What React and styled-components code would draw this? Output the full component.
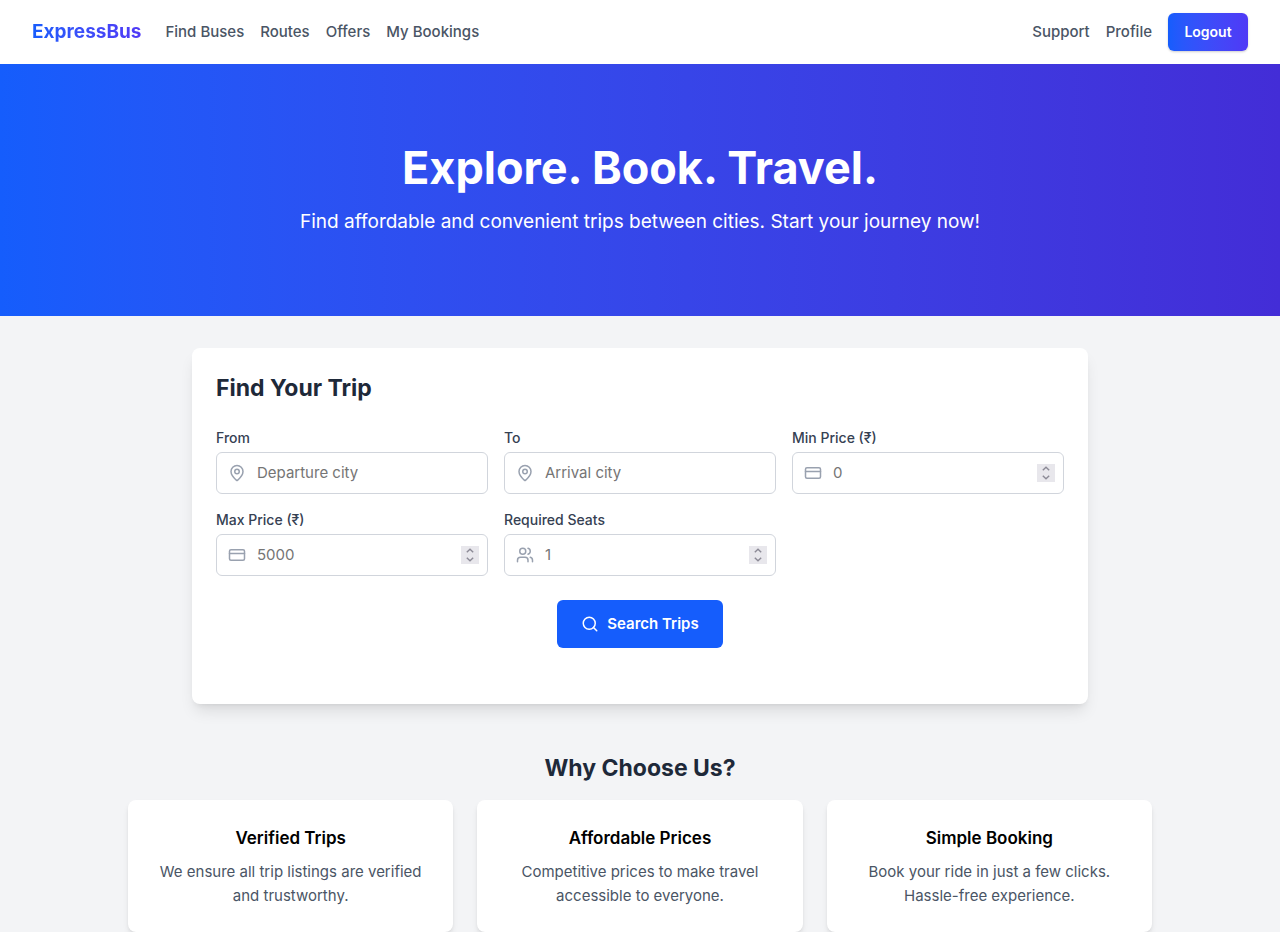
import React, { useRef } from "react";
import styled, { createGlobalStyle } from "styled-components";
import { CreditCard, MapPin, Search, Users } from "lucide-react";

const GlobalStyle = createGlobalStyle`
  *, *::before, *::after { box-sizing: border-box; }
  body {
    margin: 0;
    background: #f3f4f6;
    color: #000;
    font-family: Inter, "Liberation Sans", sans-serif;
    font-size: 15px;
    line-height: 24px;
    -webkit-font-smoothing: antialiased;
  }
  h1, h2, h3, p { margin: 0; }
  button, input { font: inherit; }
`;

const Header = styled.header`
  display: flex;
  align-items: center;
  justify-content: space-between;
  height: 64px;
  padding: 0 32px;
  background: #fff;
`;

const HeaderSide = styled.div`
  display: flex;
  align-items: center;
  gap: 24px;
`;

const Brand = styled.a`
  font-size: 19px;
  line-height: 28px;
  font-weight: 700;
  text-decoration: none;
  color: transparent;
  background: linear-gradient(to right in oklab, #155dfc, #4f39f6);
  background-clip: text;
`;

const Nav = styled.nav`
  display: flex;
  align-items: center;
  gap: 16px;
`;

const NavLink = styled.a`
  color: #4a5565;
  font-weight: 500;
  text-decoration: none;
`;

const LogoutButton = styled.button`
  width: 80px;
  height: 38px;
  padding: 0;
  border: 0;
  border-radius: 6px;
  color: #fff;
  font-size: 14px;
  font-weight: 600;
  background: linear-gradient(to right in oklab, #155dfc, #4f39f6);
  box-shadow: 0 1px 3px rgba(0, 0, 0, 0.1), 0 1px 2px rgba(0, 0, 0, 0.1);
  cursor: pointer;
`;

const Hero = styled.section`
  display: flex;
  flex-direction: column;
  gap: 16px;
  padding: 80px 16px;
  text-align: center;
  color: #fff;
  background: linear-gradient(to right in oklab, #155dfc, #432dd7);
`;

const HeroTitle = styled.h1`
  font-size: 45px;
  line-height: 48px;
  font-weight: 700;
`;

const HeroText = styled.p`
  font-size: 19px;
  line-height: 28px;
`;

const SearchCard = styled.section`
  max-width: 896px;
  margin: 32px auto 48px;
  padding: 24px 24px 56px;
  border-radius: 8px;
  background: #fff;
  box-shadow: 0 10px 15px -3px rgba(0, 0, 0, 0.1), 0 4px 6px -4px rgba(0, 0, 0, 0.1);
`;

const SectionTitle = styled.h2`
  color: #1e2939;
  font-size: 23px;
  line-height: 32px;
  font-weight: 700;
  text-align: ${(p) => (p.$centered ? "center" : "left")};
`;

const Form = styled.form`
  display: flex;
  flex-direction: column;
  align-items: center;
  gap: 24px;
  margin-top: 24px;
`;

const Fields = styled.div`
  display: grid;
  grid-template-columns: repeat(3, minmax(0, 1fr));
  gap: 16px;
  width: 100%;
`;

const FieldGroup = styled.div`
  display: flex;
  flex-direction: column;
  gap: 4px;
`;

const Label = styled.label`
  color: #364153;
  font-size: 14px;
  line-height: 20px;
  font-weight: 500;
`;

const InputBox = styled.div`
  display: flex;
  align-items: center;
  height: 42px;
  padding: 0 8px 0 11px;
  border: 1px solid #d1d5dc;
  border-radius: 6px;
  color: #99a1af;

  svg { flex: none; }
`;

const Input = styled.input`
  flex: 1;
  min-width: 0;
  padding: 0 0 0 11px;
  border: 0;
  outline: 0;
  background: transparent;
  color: #000;
  line-height: 24px;
  appearance: textfield;

  &::placeholder { color: #757575; opacity: 1; }
  &::-webkit-inner-spin-button { display: none; }
`;

const Stepper = styled.span`
  display: flex;
  flex-direction: column;
  width: 18px;
  height: 18px;
  background: #e8e7ec;
`;

const StepButton = styled.button`
  display: flex;
  justify-content: center;
  align-items: center;
  width: 18px;
  height: 9px;
  padding: 0;
  border: 0;
  background: transparent;
  color: #8c8a96;
`;

const SearchButton = styled.button`
  display: flex;
  align-items: center;
  gap: 8px;
  height: 48px;
  padding: 0 24px;
  border: 0;
  border-radius: 6px;
  background: #155dfc;
  color: #fff;
  font-weight: 600;
  cursor: pointer;
`;

const Reasons = styled.section`
  display: flex;
  flex-direction: column;
  gap: 16px;
  max-width: 1024px;
  margin: 0 auto;
`;

const ReasonGrid = styled.div`
  display: grid;
  grid-template-columns: repeat(3, minmax(0, 1fr));
  gap: 24px;
`;

const ReasonCard = styled.article`
  display: flex;
  flex-direction: column;
  gap: 8px;
  padding: 24px;
  border-radius: 8px;
  background: #fff;
  text-align: center;
  box-shadow: 0 4px 6px -1px rgba(0, 0, 0, 0.1), 0 2px 4px -2px rgba(0, 0, 0, 0.1);
`;

const ReasonTitle = styled.h3`
  font-size: 17px;
  line-height: 28px;
  font-weight: 600;
`;

const ReasonText = styled.p`
  color: #4a5565;
`;

const fields = [
  { id: "from", label: "From", placeholder: "Departure city", icon: MapPin, type: "text" },
  { id: "to", label: "To", placeholder: "Arrival city", icon: MapPin, type: "text" },
  { id: "min-price", label: "Min Price (₹)", placeholder: "0", icon: CreditCard, type: "number" },
  { id: "max-price", label: "Max Price (₹)", placeholder: "5000", icon: CreditCard, type: "number" },
  { id: "seats", label: "Required Seats", placeholder: "1", icon: Users, type: "number" },
];

const reasons = [
  { title: "Verified Trips", text: "We ensure all trip listings are verified and trustworthy." },
  { title: "Affordable Prices", text: "Competitive prices to make travel accessible to everyone." },
  { title: "Simple Booking", text: "Book your ride in just a few clicks. Hassle-free experience." },
];

function Chevron({ up }) {
  return (
    <svg width="8" height="5" viewBox="0 0 8 5" fill="none" stroke="currentColor" strokeWidth="1.4" aria-hidden="true">
      <path d={up ? "M0.8 4.2 4 1.2 7.2 4.2" : "M0.8 0.8 4 3.8 7.2 0.8"} />
    </svg>
  );
}

function Field({ id, label, placeholder, icon: Icon, type }) {
  const input = useRef(null);
  return (
    <FieldGroup>
      <Label htmlFor={id}>{label}</Label>
      <InputBox>
        <Icon size={18} />
        <Input ref={input} id={id} name={id} type={type} placeholder={placeholder} />
        {type === "number" && (
          <Stepper>
            <StepButton type="button" aria-label={`Increase ${label}`} onClick={() => input.current.stepUp()}>
              <Chevron up />
            </StepButton>
            <StepButton type="button" aria-label={`Decrease ${label}`} onClick={() => input.current.stepDown()}>
              <Chevron />
            </StepButton>
          </Stepper>
        )}
      </InputBox>
    </FieldGroup>
  );
}

export default function App() {
  return (
    <>
      <GlobalStyle />
      <Header>
        <HeaderSide>
          <Brand href="#home">ExpressBus</Brand>
          <Nav aria-label="Main">
            <NavLink href="#buses">Find Buses</NavLink>
            <NavLink href="#routes">Routes</NavLink>
            <NavLink href="#offers">Offers</NavLink>
            <NavLink href="#bookings">My Bookings</NavLink>
          </Nav>
        </HeaderSide>
        <Nav aria-label="Account">
          <NavLink href="#support">Support</NavLink>
          <NavLink href="#profile">Profile</NavLink>
          <LogoutButton type="button">Logout</LogoutButton>
        </Nav>
      </Header>
      <main>
        <Hero>
          <HeroTitle>Explore. Book. Travel.</HeroTitle>
          <HeroText>Find affordable and convenient trips between cities. Start your journey now!</HeroText>
        </Hero>
        <SearchCard>
          <SectionTitle>Find Your Trip</SectionTitle>
          <Form onSubmit={(e) => e.preventDefault()}>
            <Fields>
              {fields.map((f) => (
                <Field key={f.id} {...f} />
              ))}
            </Fields>
            <SearchButton type="submit">
              <Search size={18} />
              Search Trips
            </SearchButton>
          </Form>
        </SearchCard>
        <Reasons>
          <SectionTitle $centered>Why Choose Us?</SectionTitle>
          <ReasonGrid>
            {reasons.map((r) => (
              <ReasonCard key={r.title}>
                <ReasonTitle>{r.title}</ReasonTitle>
                <ReasonText>{r.text}</ReasonText>
              </ReasonCard>
            ))}
          </ReasonGrid>
        </Reasons>
      </main>
    </>
  );
}
